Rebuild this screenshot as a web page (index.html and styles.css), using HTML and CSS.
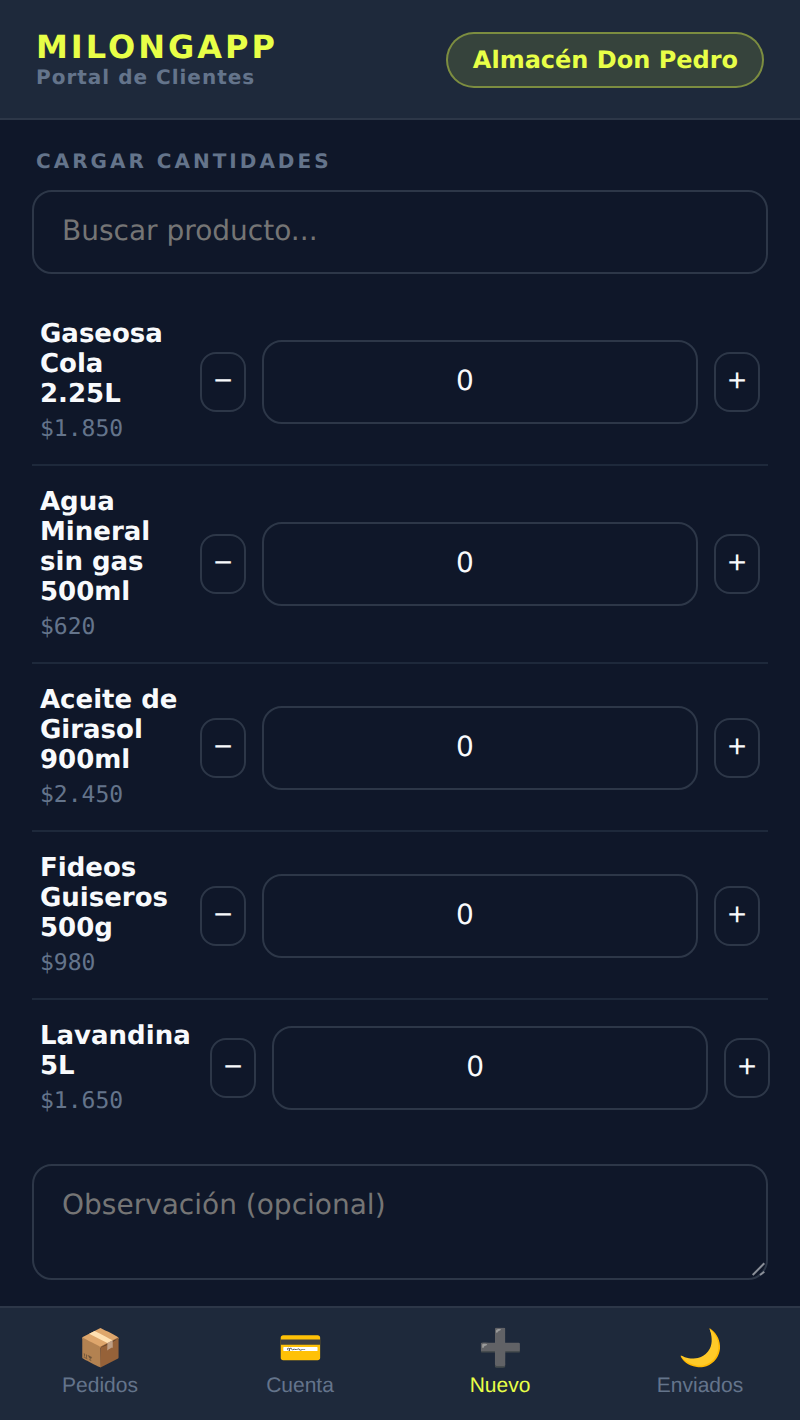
FILE: index.html
```html
<!DOCTYPE html>
<html lang="es">
<head>
    <meta charset="UTF-8">
    <meta name="viewport" content="width=device-width, initial-scale=1.0">
    <title>MilongApp - Portal de Clientes</title>
    <link rel="stylesheet" href="styles.css">
</head>
<body>
    <div class="app">
        <header class="topbar">
            <div class="brand">
                <h1>MILONGAPP</h1>
                <p>Portal de Clientes</p>
            </div>
            <div class="client-pill">Almacén Don Pedro</div>
        </header>

        <main class="content">
            <h2 class="section-title">CARGAR CANTIDADES</h2>
            <input class="field search" type="text" placeholder="Buscar producto...">

            <div class="product-list">
                <div class="product three-line">
                    <div class="product-info">
                        <div class="product-name">Gaseosa Cola 2.25L</div>
                        <div class="product-price">$1.850</div>
                    </div>
                    <div class="qty">
                        <button class="qty-btn" type="button">−</button>
                        <input class="field qty-input" type="number" value="0">
                        <button class="qty-btn" type="button">+</button>
                    </div>
                </div>
                <div class="product">
                    <div class="product-info">
                        <div class="product-name">Agua Mineral sin gas 500ml</div>
                        <div class="product-price">$620</div>
                    </div>
                    <div class="qty">
                        <button class="qty-btn" type="button">−</button>
                        <input class="field qty-input" type="number" value="0">
                        <button class="qty-btn" type="button">+</button>
                    </div>
                </div>
                <div class="product three-line">
                    <div class="product-info">
                        <div class="product-name">Aceite de Girasol 900ml</div>
                        <div class="product-price">$2.450</div>
                    </div>
                    <div class="qty">
                        <button class="qty-btn" type="button">−</button>
                        <input class="field qty-input" type="number" value="0">
                        <button class="qty-btn" type="button">+</button>
                    </div>
                </div>
                <div class="product three-line">
                    <div class="product-info">
                        <div class="product-name">Fideos Guiseros 500g</div>
                        <div class="product-price">$980</div>
                    </div>
                    <div class="qty">
                        <button class="qty-btn" type="button">−</button>
                        <input class="field qty-input" type="number" value="0">
                        <button class="qty-btn" type="button">+</button>
                    </div>
                </div>
                <div class="product">
                    <div class="product-info">
                        <div class="product-name">Lavandina 5L</div>
                        <div class="product-price">$1.650</div>
                    </div>
                    <div class="qty">
                        <button class="qty-btn" type="button">−</button>
                        <input class="field qty-input" type="number" value="0">
                        <button class="qty-btn" type="button">+</button>
                    </div>
                </div>
            </div>

            <div class="notes-wrap">
                <textarea class="field notes" placeholder="Observación (opcional)"></textarea>
                <svg class="notes-grip" viewBox="0 0 16 16" aria-hidden="true">
                    <path d="M2.7 13 14.3 1.3M10 13l4.3-3.3"></path>
                </svg>
            </div>
        </main>

        <nav class="tabbar">
            <button class="tab" type="button"><span class="tab-icon">📦</span>Pedidos</button>
            <button class="tab" type="button"><span class="tab-icon">💳</span>Cuenta</button>
            <button class="tab active" type="button"><span class="tab-icon">➕</span>Nuevo</button>
            <button class="tab" type="button"><span class="tab-icon">🌙</span>Enviados</button>
        </nav>
    </div>
</body>
</html>
```

FILE: styles.css
```css
* {
    box-sizing: border-box;
    text-rendering: geometricPrecision;
}

/* designed at 400px wide, shown at double size */
body {
    zoom: 2;
    margin: 0;
    background-color: #0f1729;
    color: #f8fafc;
    font-family: "DejaVu Sans", sans-serif;
}

.app {
    height: 710px;
    display: flex;
    flex-direction: column;
    overflow: hidden;
}

/* Header */
.topbar {
    display: flex;
    align-items: center;
    justify-content: space-between;
    height: 60px;
    padding: 1px 18px 0;
    background-color: #1e293b;
    border-bottom: 1px solid #2d3748;
}

.brand h1 {
    margin: 0;
    font-size: 16px;
    line-height: 16px;
    letter-spacing: 1.5px;
    color: #e8ff47;
}

.brand p {
    margin: 1px 0 0;
    font-size: 10px;
    line-height: 12px;
    font-weight: bold;
    letter-spacing: 0.5px;
    color: #64748b;
}

.client-pill {
    padding: 6px 12px 6px 12.5px;
    font-size: 12px;
    line-height: 14px;
    font-weight: bold;
    color: #e8ff47;
    background-color: rgba(232, 255, 71, 0.12);
    border: 1px solid rgba(232, 255, 71, 0.4);
    border-radius: 20px;
}

/* Main */
.content {
    flex: 1;
    padding: 14.5px 16px 0;
}

.section-title {
    margin: 0 0 8.5px 2px;
    font-size: 10px;
    line-height: 12px;
    letter-spacing: 1.5px;
    color: #64748b;
}

.field {
    display: block;
    background-color: #0f1729;
    border: 1px solid #2d3748;
    border-radius: 10px;
    color: #f8fafc;
    font-family: "DejaVu Sans", sans-serif;
    font-size: 14px;
}

.field::placeholder {
    color: #757575;
}

.search {
    width: 100%;
    height: 42px;
    padding: 0 14px 2px;
    margin-bottom: 12px;
}

.product {
    display: flex;
    align-items: center;
    padding: 10px 4px;
    border-bottom: 1px solid #1e293b;
}

.product:last-child {
    border-bottom: none;
}

.product-info {
    flex: 1;
    margin: 0.5px 9.7px -0.5px 0;
}

.product-name {
    font-size: 13px;
    line-height: 15px;
    font-weight: bold;
}

.product-price {
    margin-top: 2px;
    font-family: "DejaVu Sans Mono", monospace;
    font-size: 11.5px;
    line-height: 16px;
    color: #64748b;
}

.qty {
    display: flex;
    align-items: center;
    gap: 8px;
    flex-shrink: 0;
}

.three-line .qty {
    margin-top: 1px;
}

.qty-btn {
    width: 23px;
    height: 30px;
    padding: 0 0 2px;
    background-color: #0f1729;
    border: 1px solid #2d3748;
    border-radius: 8px;
    color: #f8fafc;
    font-family: "Liberation Sans", Arial, sans-serif;
    font-size: 16px;
}

.qty-input {
    width: 218px;
    height: 42px;
    padding-bottom: 3px;
    text-align: center;
}

.notes-wrap {
    position: relative;
    margin-top: 14px;
}

.notes {
    width: 100%;
    height: 58px;
    padding: 11px 14px 10px;
    resize: none;
}

.notes-grip {
    position: absolute;
    right: 1px;
    bottom: 1px;
    width: 8px;
    height: 8px;
    fill: none;
    stroke: #8a8f98;
    stroke-width: 2;
}

/* Bottom nav */
.tabbar {
    display: flex;
    height: 57px;
    flex-shrink: 0;
    background-color: #1e293b;
    border-top: 1px solid #2d3748;
}

.tab {
    flex: 1;
    display: flex;
    flex-direction: column;
    align-items: center;
    gap: 2.5px;
    padding: 9.5px 0 0;
    background: none;
    border: none;
    color: #64748b;
    font-family: "Liberation Sans", Arial, sans-serif;
    font-size: 10.5px;
}

.tab-icon {
    font-size: 18px;
    line-height: 21px;
    text-rendering: auto;
}

.tab.active {
    color: #e8ff47;
}
```
